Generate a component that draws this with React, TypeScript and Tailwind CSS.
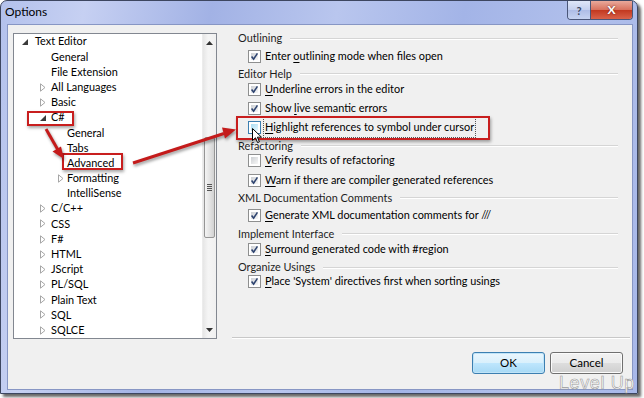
import React from "react";

function CheckBox({ checked, hot }: { checked?: boolean; hot?: boolean }) {
  return (
    <span
      className={`relative inline-flex w-[13px] h-[13px] shrink-0 border bg-white ${
        hot ? "border-[#3c7fb1]" : "border-[#8e8f8f]"
      }`}
    >
      <span
        className={`absolute inset-[2px] ${
          hot
            ? "bg-[linear-gradient(135deg,#a9dcf3,#e6f7fd)]"
            : "bg-[linear-gradient(135deg,#cdd0d4,#f7f7f7)]"
        }`}
      />
      {checked && (
        <svg className="absolute inset-0" width="11" height="11" viewBox="0 0 11 11">
          <path d="M2.6 5.6 L4.6 8.2 L8.4 2.4" fill="none" stroke="#2e4470" strokeWidth="1.6" />
        </svg>
      )}
    </span>
  );
}

function Header({ text, mt }: { text: string; mt: string }) {
  return (
    <div className={`flex items-center h-[15px] ${mt}`}>
      <span className="text-[#1e1e1e] whitespace-nowrap">{text}</span>
      <span className="flex-1 ml-[8px] h-0 border-t border-t-[#d5d5d5] border-b border-b-white" />
    </div>
  );
}

function Row({
  u,
  rest,
  pre,
  checked,
  hot,
  mt,
}: {
  u: string;
  rest: string;
  pre?: string;
  checked?: boolean;
  hot?: boolean;
  mt: string;
}) {
  return (
    <div className={`flex items-center h-[15px] pl-[10px] ${mt}`}>
      <CheckBox checked={checked} hot={hot} />
      <span
        className={`ml-[4px] whitespace-nowrap text-black ${
          hot ? "outline outline-1 outline-dotted outline-[#555] outline-offset-[1px]" : ""
        }`}
      >
        {pre}
        <span className="underline underline-offset-2">{u}</span>
        {rest}
      </span>
    </div>
  );
}

function Collapsed() {
  return (
    <svg width="6" height="9" viewBox="0 0 6 9">
      <path d="M0.5 0.8 L5 4.5 L0.5 8.2 Z" fill="white" stroke="#a6a6a6" strokeWidth="1" />
    </svg>
  );
}

function Expanded() {
  return (
    <svg width="6" height="6" viewBox="0 0 6 6">
      <path d="M6 0 L6 6 L0 6 Z" fill="#3a3a3a" />
    </svg>
  );
}

type Item = { t: string; lvl: 1 | 2 | 3; arrow?: "c" | "e" };
const items: Item[] = [
  { t: "Text Editor", lvl: 1, arrow: "e" },
  { t: "General", lvl: 2 },
  { t: "File Extension", lvl: 2 },
  { t: "All Languages", lvl: 2, arrow: "c" },
  { t: "Basic", lvl: 2, arrow: "c" },
  { t: "C#", lvl: 2, arrow: "e" },
  { t: "General", lvl: 3 },
  { t: "Tabs", lvl: 3 },
  { t: "Advanced", lvl: 3 },
  { t: "Formatting", lvl: 3, arrow: "c" },
  { t: "IntelliSense", lvl: 3 },
  { t: "C/C++", lvl: 2, arrow: "c" },
  { t: "CSS", lvl: 2, arrow: "c" },
  { t: "F#", lvl: 2, arrow: "c" },
  { t: "HTML", lvl: 2, arrow: "c" },
  { t: "JScript", lvl: 2, arrow: "c" },
  { t: "PL/SQL", lvl: 2, arrow: "c" },
  { t: "Plain Text", lvl: 2, arrow: "c" },
  { t: "SQL", lvl: 2, arrow: "c" },
  { t: "SQLCE", lvl: 2, arrow: "c" },
];

function TreeRow({ it }: { it: Item }) {
  const pad = it.lvl === 1 ? "pl-[8px]" : it.lvl === 2 ? "pl-[26px]" : "pl-[44px]";
  const box = it.lvl === 1 ? "w-[13px]" : it.lvl === 2 ? "w-[11px]" : "w-[9px]";
  return (
    <div className={`flex items-center h-[15.2px] ${pad}`}>
      <span className={`flex items-center ${box} h-full ${it.arrow === "e" ? "pt-[1px]" : ""}`}>
        {it.arrow === "c" && <Collapsed />}
        {it.arrow === "e" && <Expanded />}
      </span>
      <span className="whitespace-nowrap text-black">{it.t}</span>
    </div>
  );
}

function Scrollbar() {
  return (
    <div className="w-[14px] flex flex-col bg-[linear-gradient(90deg,#e6e6e6,#f5f5f5_40%,#f0f0f0)] border-l border-l-[#ececec]">
      <div className="h-[17px] flex items-center justify-center">
        <svg width="7" height="4" viewBox="0 0 7 4">
          <path d="M0 4 L3.5 0 L7 4 Z" fill="#333" />
        </svg>
      </div>
      <div className="mt-[86px] h-[101px] mx-[1px] rounded-[2px] border border-[#959595] bg-[linear-gradient(90deg,#f4f4f4,#e2e2e2_55%,#d2d2d2)] flex flex-col items-center justify-center gap-[1px]">
        <span className="w-[5px] h-px bg-[#555]" />
        <span className="w-[5px] h-px bg-[#555]" />
        <span className="w-[5px] h-px bg-[#555]" />
        <span className="w-[5px] h-px bg-[#555]" />
      </div>
      <div className="mt-auto h-[17px] flex items-center justify-center">
        <svg width="7" height="4" viewBox="0 0 7 4">
          <path d="M0 0 L3.5 4 L7 0 Z" fill="#333" />
        </svg>
      </div>
    </div>
  );
}

export default function App() {
  return (
    <div className="relative w-[644px] h-[398px] bg-white overflow-hidden font-['Lato',sans-serif] text-[10.9px]">
      {/* window frame */}
      <div className="w-[638px] h-[394px] rounded-t-[7px] border border-[#3d4660] shadow-[3px_3px_3px_rgba(0,0,0,0.6)] bg-[linear-gradient(100deg,#b3c1ec_0%,#c6d0f2_12%,#a2b2e5_30%,#b9c6ee_48%,#a3b4e7_66%,#b0bfeb_82%,#a8b8e9_100%)] flex flex-col">
        {/* title bar */}
        <div className="h-[23px] flex items-start">
          <span className="pl-[4px] pt-[3px] leading-[16px] text-[12px] text-black">Options</span>
          <div className="ml-auto mr-[4px] flex rounded-b-[4px] overflow-hidden border border-t-0 border-[#4a5678]">
            <div className="w-[23px] h-[18px] flex items-center justify-center bg-[linear-gradient(180deg,#dfe6f8,#c4cfee_50%,#aebde6_51%,#c6d3f1)] border-r border-r-[#4a5678] text-[11px] font-bold text-[#3b4660] leading-none">
              ?
            </div>
            <div className="w-[41px] h-[18px] flex items-center justify-center bg-[linear-gradient(180deg,#e9a99b,#d8705c_50%,#c2381f_51%,#d9624a)] text-white font-bold text-[12px] leading-none [text-shadow:0_0_2px_#5a1a10]">
              X
            </div>
          </div>
        </div>
        {/* client area */}
        <div className="ml-[6px] w-[626px] h-[366px] border border-[#8796c4] bg-[#f0f0f0] flex flex-col">
          <div className="flex items-start pt-[6px] pl-[5px]">
            {/* tree */}
            <div className="mt-[2px] w-[204px] h-[306px] border border-[#828790] bg-white flex">
              <div className="flex-1 overflow-hidden">
                {items.map((it, i) => (
                  <TreeRow key={i} it={it} />
                ))}
              </div>
              <Scrollbar />
            </div>
            {/* options */}
            <div className="ml-[15px] w-[398px] h-[308px] flex flex-col">
              <div className="pl-[6px] pr-[12px]">
                <Header text="Outlining" mt="mt-0" />
                <Row pre="Enter " u="o" rest="utlining mode when files open" checked mt="mt-[2.5px]" />
                <Header text="Editor Help" mt="mt-[3px]" />
                <Row u="U" rest="nderline errors in the editor" checked mt="mt-0" />
                <Row pre="Show " u="l" rest="ive semantic errors" checked mt="mt-[4.5px]" />
                <Row u="H" rest="ighlight references to symbol under cursor" hot mt="mt-[4px]" />
                <Header text="Refactoring" mt="mt-[3.5px]" />
                <Row u="V" rest="erify results of refactoring" mt="mt-[-0.5px]" />
                <Row u="W" rest="arn if there are compiler generated references" checked mt="mt-[4.5px]" />
                <Header text="XML Documentation Comments" mt="mt-[3px]" />
                <Row u="G" rest="enerate XML documentation comments for ///" checked mt="mt-[2.5px]" />
                <Header text="Implement Interface" mt="mt-[3.5px]" />
                <Row u="S" rest="urround generated code with #region" checked mt="mt-0" />
                <Header text="Organize Usings" mt="mt-[3.5px]" />
                <Row u="P" rest="lace 'System' directives first when sorting usings" checked mt="mt-[-1px]" />
              </div>
              <div className="mt-auto h-0 border-t border-t-[#c8c8c8] border-b border-b-white" />
            </div>
          </div>
          {/* buttons */}
          <div className="mt-[13px] flex justify-end gap-[5px] pr-[9px]">
            <button className="w-[73px] h-[22px] rounded-[3px] border border-[#3c7fb1] bg-[linear-gradient(180deg,#eaf6fd,#d9f0fc_50%,#bee6fd_51%,#a7d9f5)] shadow-[inset_0_0_0_1px_#c0e4f8] text-[11.5px] text-black">
              OK
            </button>
            <button className="w-[73px] h-[22px] rounded-[3px] border border-[#707070] bg-[linear-gradient(180deg,#f2f2f2,#ebebeb_50%,#dddddd_51%,#cfcfcf)] shadow-[inset_0_0_0_1px_#fbfbfb] text-[11.5px] text-black">
              Cancel
            </button>
          </div>
        </div>
      </div>

      {/* watermark */}
      <div className="absolute left-[559px] top-[373px] whitespace-nowrap text-[18px] leading-[20px] font-['Liberation_Sans',sans-serif] text-white [-webkit-text-stroke:0.6px_#9a9a9a] tracking-[0.6px]">
        Level Up
      </div>

      {/* red annotation boxes */}
      <div className="absolute left-[27px] top-[111px] w-[47px] h-[15px] border-2 border-[#c81e1e] shadow-[1px_2px_3px_rgba(0,0,0,0.35)]" />
      <div className="absolute left-[62px] top-[153px] w-[61px] h-[17px] border-2 border-[#c81e1e] shadow-[1px_2px_3px_rgba(0,0,0,0.35)]" />
      <div className="absolute left-[236px] top-[116px] w-[254px] h-[24px] border-2 border-[#c81e1e] shadow-[1px_2px_3px_rgba(0,0,0,0.35)]" />

      {/* arrows */}
      <svg
        className="absolute left-0 top-0 pointer-events-none [filter:drop-shadow(1px_2px_1.5px_rgba(0,0,0,0.4))]"
        width="644"
        height="398"
        viewBox="0 0 644 398"
      >
        <line x1="46" y1="129" x2="58" y2="150" stroke="#c41b1b" strokeWidth="3" />
        <path d="M64 159 L52.5 151.5 L61 146.5 Z" fill="#c41b1b" />
        <line x1="133" y1="163" x2="224" y2="133.5" stroke="#c41b1b" strokeWidth="3" />
        <path d="M236 129.5 L222 127.5 L225 138.5 Z" fill="#c41b1b" />
      </svg>

      {/* mouse cursor */}
      <svg className="absolute left-[252px] top-[128px]" width="11" height="16" viewBox="0 0 11 16">
        <path d="M0.5 0.5 L0.5 12.5 L3.5 9.8 L5.6 14.6 L7.4 13.8 L5.4 9.2 L9.5 9.2 Z" fill="white" stroke="black" strokeWidth="1" />
      </svg>
    </div>
  );
}
